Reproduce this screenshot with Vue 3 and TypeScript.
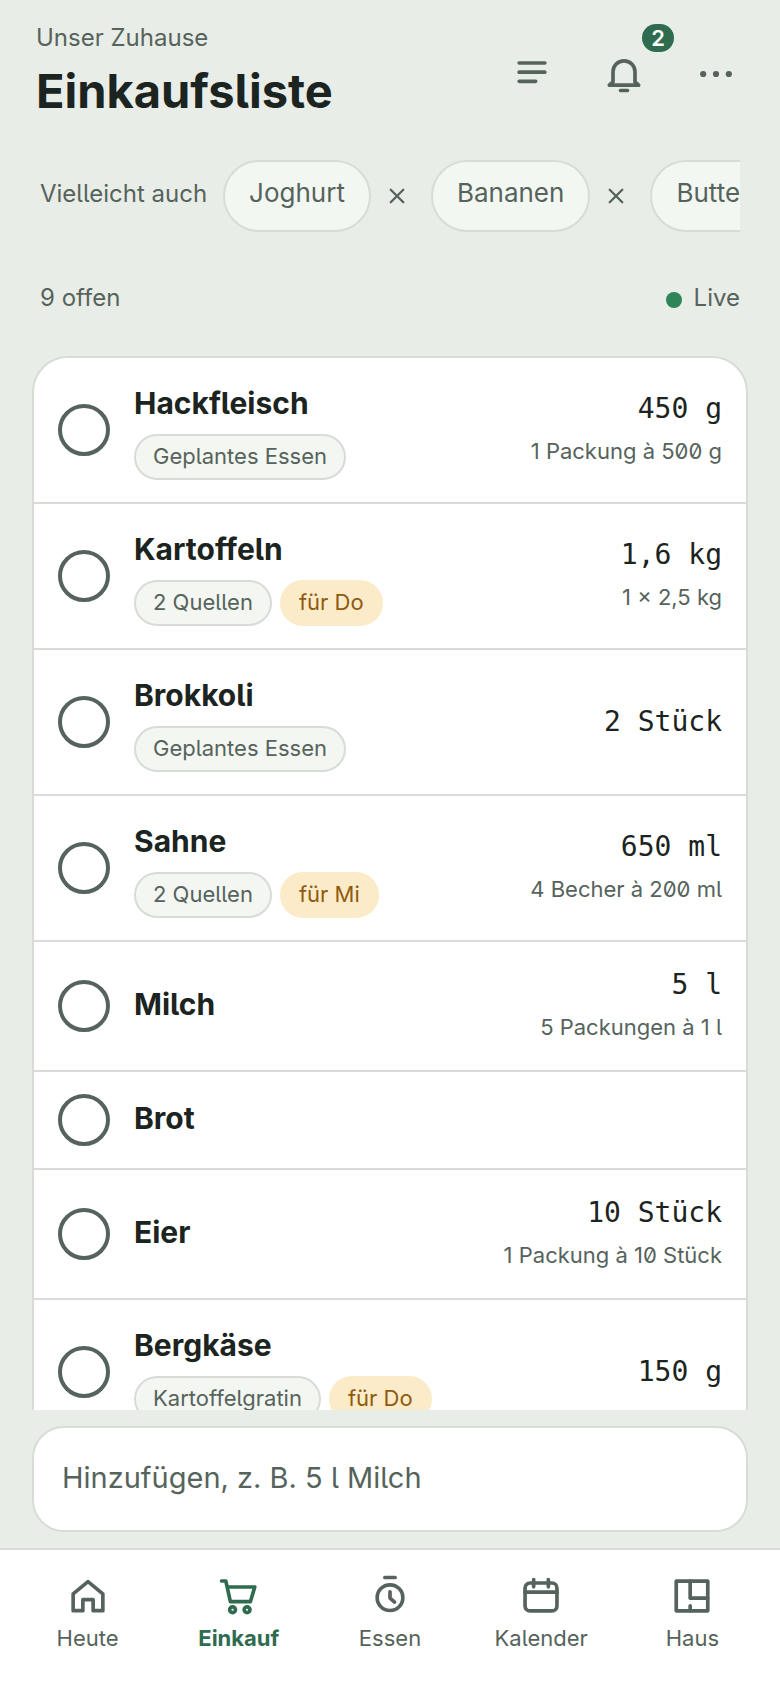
<script setup lang="ts">
import { ref } from 'vue'

interface Item {
  id: number
  name: string
  source?: string
  due?: string
  amount?: string
  pack?: string
  done: boolean
}

interface Tab {
  label: string
  paths: string[]
}

const suggestions = ref<string[]>(['Joghurt', 'Bananen', 'Butter'])

const items = ref<Item[]>([
  { id: 1, name: 'Hackfleisch', source: 'Geplantes Essen', amount: '450 g', pack: '1 Packung à 500 g', done: false },
  { id: 2, name: 'Kartoffeln', source: '2 Quellen', due: 'für Do', amount: '1,6 kg', pack: '1 × 2,5 kg', done: false },
  { id: 3, name: 'Brokkoli', source: 'Geplantes Essen', amount: '2 Stück', done: false },
  { id: 4, name: 'Sahne', source: '2 Quellen', due: 'für Mi', amount: '650 ml', pack: '4 Becher à 200 ml', done: false },
  { id: 5, name: 'Milch', amount: '5 l', pack: '5 Packungen à 1 l', done: false },
  { id: 6, name: 'Brot', done: false },
  { id: 7, name: 'Eier', amount: '10 Stück', pack: '1 Packung à 10 Stück', done: false },
  { id: 8, name: 'Bergkäse', source: 'Kartoffelgratin', due: 'für Do', amount: '150 g', done: false },
])

const tabs: Tab[] = [
  { label: 'Heute', paths: ['M12 4.2 3.9 10.8V20h5.3v-6h5.6v6h5.3v-9.2z'] },
  {
    label: 'Einkauf',
    paths: [
      'M2.5 3.8h2.3L7.3 15.1h10.9l2.4-8H5.6',
      'M6.9 19.5a1.6 1.6 0 1 0 3.2 0a1.6 1.6 0 1 0-3.2 0',
      'M14.8 19.5a1.6 1.6 0 1 0 3.2 0a1.6 1.6 0 1 0-3.2 0',
    ],
  },
  { label: 'Essen', paths: ['M9.2 1.9h5.6', 'M5 12.9a7 7 0 1 0 14 0a7 7 0 1 0-14 0', 'M12 9.7v3.4l2.5 2.2'] },
  {
    label: 'Kalender',
    paths: [
      'M6 4.9h12a2.7 2.7 0 0 1 2.7 2.7v9.8a2.7 2.7 0 0 1-2.7 2.7H6a2.7 2.7 0 0 1-2.7-2.7V7.6A2.7 2.7 0 0 1 6 4.9z',
      'M3.3 9.9h17.4',
      'M8 3v4M16 3v4',
    ],
  },
  { label: 'Haus', paths: ['M3.4 3.9h17.2v16.2H3.4z', 'M11 3.9v9.3h9.6', 'M11 17.4v2.7'] },
]

const activeTab = ref('Einkauf')
const draft = ref('')

function dismiss(name: string): void {
  suggestions.value = suggestions.value.filter((s) => s !== name)
}
</script>

<template>
  <div class="screen">
    <header class="top">
      <div class="titles">
        <p class="household">Unser Zuhause</p>
        <h1 class="title">Einkaufsliste</h1>
      </div>
      <div class="actions">
        <button type="button" class="icon-button" aria-label="Sortieren">
          <svg class="icon" viewBox="0 0 24 24"><path d="M5 6h14M5 11h14M5 16h9" /></svg>
        </button>
        <button type="button" class="icon-button" aria-label="Benachrichtigungen">
          <svg class="icon" viewBox="0 0 24 24">
            <path d="M4 18.1 6 16.3V10.8a6 6 0 0 1 12 0v5.5l2 1.8z" />
            <path d="M10.1 21h3.8" />
          </svg>
          <span class="badge">2</span>
        </button>
        <button type="button" class="icon-button" aria-label="Mehr">
          <svg class="icon dots" viewBox="0 0 24 24">
            <circle cx="5" cy="12" r="1.7" />
            <circle cx="12" cy="12" r="1.7" />
            <circle cx="19" cy="12" r="1.7" />
          </svg>
        </button>
      </div>
    </header>

    <section class="suggestions" aria-label="Vorschläge">
      <span class="suggest-label">Vielleicht auch</span>
      <div v-for="name in suggestions" :key="name" class="suggestion">
        <button type="button" class="chip">{{ name }}</button>
        <button type="button" class="dismiss" :aria-label="name + ' ausblenden'" @click="dismiss(name)">
          <svg viewBox="0 0 14 14"><path d="M1.5 1.5l11 11M12.5 1.5l-11 11" /></svg>
        </button>
      </div>
    </section>

    <div class="status">
      <span>9 offen</span>
      <span class="live"><i class="live-dot"></i>Live</span>
    </div>

    <main class="scroller">
      <ul class="list">
        <li v-for="item in items" :key="item.id" class="row">
          <input :id="'item-' + item.id" v-model="item.done" type="checkbox" class="check" />
          <div class="info">
            <label :for="'item-' + item.id" class="name">{{ item.name }}</label>
            <div v-if="item.source || item.due" class="tags">
              <span v-if="item.source" class="tag">{{ item.source }}</span>
              <span v-if="item.due" class="tag due">{{ item.due }}</span>
            </div>
          </div>
          <div v-if="item.amount" class="quantity">
            <span class="amount">{{ item.amount }}</span>
            <span v-if="item.pack" class="pack">{{ item.pack }}</span>
          </div>
        </li>
      </ul>
    </main>

    <form class="composer" @submit.prevent>
      <input v-model="draft" class="field" type="text" aria-label="Artikel hinzufügen" placeholder="Hinzufügen, z. B. 5 l Milch" />
    </form>

    <nav class="tabs">
      <a
        v-for="tab in tabs"
        :key="tab.label"
        href="#"
        class="tab"
        :class="{ active: tab.label === activeTab }"
        @click.prevent="activeTab = tab.label"
      >
        <svg class="icon" viewBox="0 0 24 24"><path v-for="d in tab.paths" :key="d" :d="d" /></svg>
        <span>{{ tab.label }}</span>
      </a>
    </nav>
  </div>
</template>

<style>
body {
  background: #e9ede7;
}
</style>

<style scoped>
.screen {
  --ink: #1b2420;
  --muted: #56635c;
  --line: #d7dcd7;
  --green: #2f6b4f;
  display: flex;
  flex-direction: column;
  height: 100vh;
  box-sizing: border-box;
  overflow: hidden;
  background: #e9ede7;
  color: var(--muted);
  font-family: Inter, "Liberation Sans", sans-serif;
  font-size: 24px;
  font-feature-settings: "cv05";
}
.screen * {
  box-sizing: border-box;
}
button,
input {
  font-family: inherit;
  font-feature-settings: inherit;
  color: inherit;
}
button {
  border: 0;
  padding: 0;
  background: none;
  cursor: pointer;
}
.top {
  display: flex;
  flex: none;
  align-items: flex-end;
  justify-content: space-between;
  padding: 20px 20px 0 36px;
}
.titles {
  display: grid;
  gap: 8px;
}
.household {
  margin: 0;
  line-height: 36px;
}
.title {
  margin: 0;
  color: var(--ink);
  font-size: 47px;
  font-weight: 700;
  line-height: 54px;
}
.actions {
  display: flex;
  gap: 4px;
}
.icon-button {
  position: relative;
  display: grid;
  place-items: center;
  width: 88px;
  height: 88px;
}
.icon {
  display: block;
  width: 44px;
  height: 44px;
  fill: none;
  stroke: currentColor;
  stroke-width: 2;
  stroke-linecap: round;
  stroke-linejoin: round;
}
.dots {
  fill: currentColor;
  stroke: none;
}
.badge {
  position: absolute;
  top: -6px;
  right: -6px;
  min-width: 32px;
  height: 28px;
  border-radius: 14px;
  background: var(--green);
  color: #fff;
  font-size: 22px;
  font-weight: 600;
  line-height: 28px;
  text-align: center;
}
.suggestions {
  display: flex;
  flex: none;
  align-items: center;
  gap: 12px;
  margin: 42px 40px 0;
  overflow: hidden;
}
.suggest-label {
  flex: none;
  padding: 0 4px 6px 0;
}
.suggestion {
  display: flex;
  flex: none;
  align-items: center;
  gap: 4px;
}
.chip {
  height: 72px;
  padding: 0 24px 8px;
  border: 2px solid var(--line);
  border-radius: 36px;
  background: #f3f7f2;
  font-size: 26px;
}
.dismiss {
  display: grid;
  place-items: center;
  width: 44px;
  height: 72px;
}
.dismiss svg {
  width: 16px;
  height: 16px;
  fill: none;
  stroke: currentColor;
  stroke-width: 2;
  stroke-linecap: round;
}
.status {
  display: flex;
  flex: none;
  justify-content: space-between;
  margin: 48px 40px 40px;
  line-height: 36px;
}
.live {
  display: flex;
  align-items: center;
  gap: 12px;
}
.live-dot {
  width: 16px;
  height: 16px;
  margin-top: 4px;
  border-radius: 50%;
  background: #2e8559;
}
.scroller {
  flex: 1;
  min-height: 0;
  padding: 0 32px;
  overflow-y: auto;
  scrollbar-width: none;
}
.list {
  margin: 0;
  padding: 0;
  border: 2px solid var(--line);
  border-radius: 36px;
  background: #fff;
  list-style: none;
}
.row {
  display: flex;
  align-items: center;
  gap: 24px;
  padding: 22px 24px;
  border-bottom: 2px solid var(--line);
}
.row:last-child {
  border-bottom: 0;
}
.check {
  flex: none;
  width: 52px;
  height: 52px;
  margin: 0;
  border: 4px solid var(--muted);
  border-radius: 50%;
  appearance: none;
}
.check:checked {
  background: var(--green);
}
.info {
  flex: 1;
  min-width: 0;
}
.name {
  display: block;
  padding-bottom: 4px;
  color: var(--ink);
  font-size: 30px;
  font-weight: 700;
  line-height: 46px;
}
.tags {
  display: flex;
  gap: 8px;
  padding-top: 4px;
}
.tag {
  height: 46px;
  padding: 0 17px;
  border: 2px solid var(--line);
  border-radius: 23px;
  background: #f3f6f1;
  font-size: 22px;
  line-height: 40px;
  white-space: nowrap;
}
.due {
  border-color: #fcebc9;
  background: #fcebc9;
  color: #8f5a10;
}
.quantity {
  display: grid;
  flex: none;
  justify-items: end;
  line-height: 42px;
}
.amount {
  color: var(--ink);
  font-family: "DejaVu Sans Mono", monospace;
  font-size: 28px;
}
.pack {
  font-size: 22px;
  font-variant-numeric: slashed-zero;
}
.composer {
  flex: none;
  padding: 16px 32px;
}
.field {
  display: block;
  width: 100%;
  height: 106px;
  padding: 0 28px 4px;
  border: 2px solid var(--line);
  border-radius: 32px;
  background: #fff;
  font-size: 29px;
}
.field::placeholder {
  color: var(--muted);
  opacity: 1;
}
.tabs {
  display: flex;
  flex: none;
  padding: 24px 12px 34px;
  border-top: 2px solid var(--line);
  background: #fff;
}
.tab {
  display: flex;
  flex: 1;
  flex-direction: column;
  align-items: center;
  gap: 4px;
  color: inherit;
  font-size: 22px;
  line-height: 32px;
  text-decoration: none;
}
.active {
  color: var(--green);
  font-weight: 700;
}
</style>
